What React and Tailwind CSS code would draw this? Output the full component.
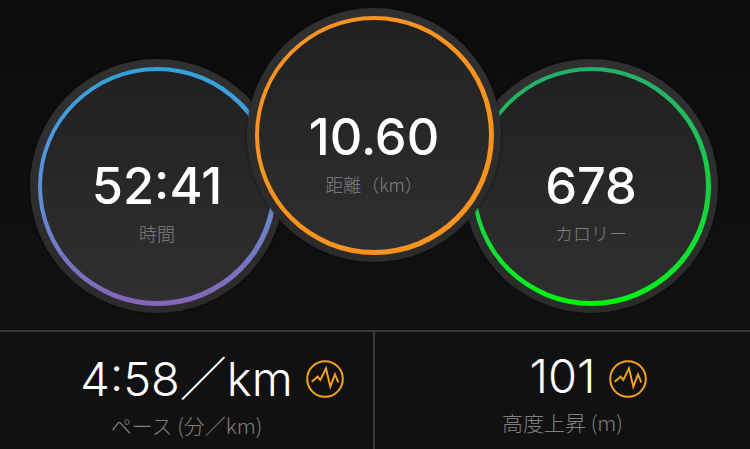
const cjk = '"Noto Sans CJK JP", sans-serif';

function Gauge({ value, label, ring, className, bodyClass }) {
  return (
    <div className={`w-[254px] h-[254px] shrink-0 rounded-full p-[7.5px] bg-gradient-to-b from-[#303030] to-[#2b2b2b] shadow-[0_0_3px_rgba(0,0,0,0.6)] ${className}`}>
      <div className={`w-full h-full rounded-full p-[4.5px] ${ring}`}>
        <div className={`w-full h-full rounded-full bg-gradient-to-b from-[#212121] to-[#2f2f2f] flex flex-col items-center ${bodyClass}`}>
          <div className="font-['Inter',sans-serif] font-[550] text-[50.5px] leading-[60px] text-white">{value}</div>
          <div className="mt-[5px] font-['Noto_Sans_CJK_JP',sans-serif] text-[18px] leading-[24px] font-light text-[#808080]">{label}</div>
        </div>
      </div>
    </div>
  );
}

function WaveIcon() {
  return (
    <svg viewBox="0 0 38 38" fill="none" className="absolute left-full top-[12px] ml-[13px] w-[38px] h-[38px]">
      <circle cx="19" cy="19" r="17.8" stroke="#f5a31f" strokeWidth="2" />
      <path d="M5.7 21.7 11.7 16.7 14.3 20 20 8.3 24.3 26.7 29 14.3 32.3 22.3" stroke="#f5a31f" strokeWidth="1.9" strokeLinejoin="miter" />
    </svg>
  );
}

function Stat({ children, label, className }) {
  return (
    <div className={`flex flex-col items-center pt-[16px] ${className}`}>
      <div className="relative font-['Inter',sans-serif] font-light text-[47px] leading-[56px] text-white whitespace-nowrap">
        {children}
        <WaveIcon />
      </div>
      <div className="mt-[4px] font-light text-[21px] leading-[28px] text-[#808080]" style={{ fontFamily: cjk }}>{label}</div>
    </div>
  );
}

export default function App() {
  return (
    <div className="w-[750px] h-[449px] overflow-hidden bg-[#111111] flex flex-col">
      <div className="h-[330px] shrink-0 flex items-start pl-[30px] bg-gradient-to-b from-[#0c0c0c] to-[#111111]">
        <Gauge
          value="52:41"
          label="時間"
          ring="bg-gradient-to-b from-[#2fa3dd] via-[#5b8fd6] to-[#8365b8]"
          className="mt-[59px]"
          bodyClass="pt-[85px]"
        />
        <Gauge
          value="10.60"
          label="距離（km）"
          ring="bg-[#f7931e]"
          className="mt-[8px] -ml-[37px] relative z-10"
          bodyClass="pt-[87px]"
        />
        <Gauge
          value="678"
          label="カロリー"
          ring="bg-gradient-to-b from-[#25ae6b] via-[#17cf42] to-[#02f20c]"
          className="mt-[59px] -ml-[37px]"
          bodyClass="pt-[85px]"
        />
      </div>
      <div className="flex-1 flex border-t-2 border-[#3a3a3a]">
        <Stat label="ペース (分／km)" className="w-[375px] border-r-2 border-[#3a3a3a]">
          4:58<span className="font-['Noto_Sans_CJK_JP',sans-serif]">／</span>km
        </Stat>
        <Stat label="高度上昇 (m)" className="flex-1">101</Stat>
      </div>
    </div>
  );
}
